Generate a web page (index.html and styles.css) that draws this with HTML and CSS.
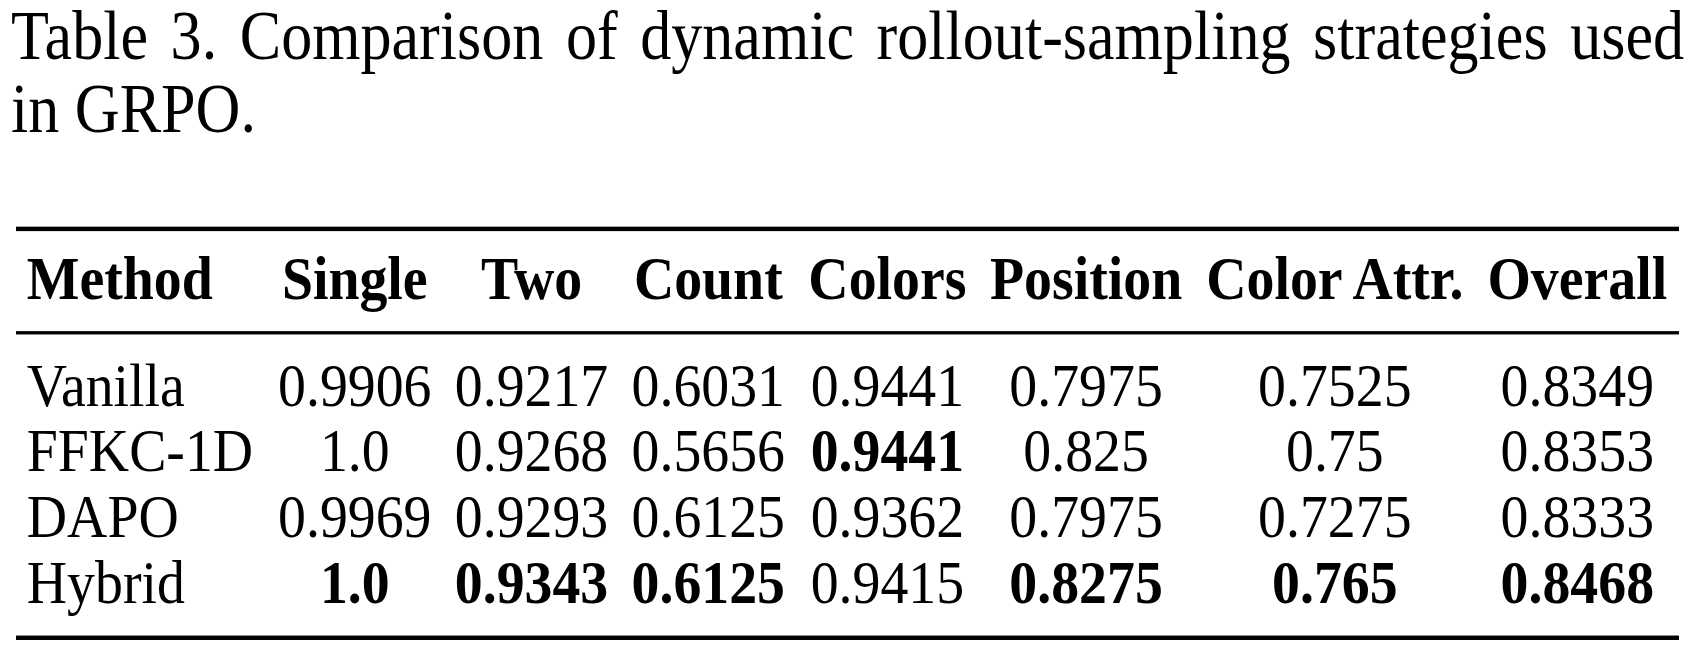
FILE: index.html
```html
<!DOCTYPE html>
<html>
	<head>
		<meta charset="UTF-8">
		<title>Table 3</title>
		<link rel="stylesheet" href="styles.css">
	</head>
	<body>
		<div class="page">
			<p class="caption">Table 3. Comparison of dynamic rollout-sampling strategies used in GRPO.</p>

			<table class="results">
				<thead>
					<tr>
						<th class="name">Method</th>
						<th>Single</th>
						<th>Two</th>
						<th>Count</th>
						<th>Colors</th>
						<th>Position</th>
						<th>Color Attr.</th>
						<th>Overall</th>
					</tr>
				</thead>
				<tbody>
					<tr>
						<td class="name">Vanilla</td>
						<td>0.9906</td>
						<td>0.9217</td>
						<td>0.6031</td>
						<td>0.9441</td>
						<td>0.7975</td>
						<td>0.7525</td>
						<td>0.8349</td>
					</tr>
					<tr>
						<td class="name">FFKC-1D</td>
						<td>1.0</td>
						<td>0.9268</td>
						<td>0.5656</td>
						<td class="best">0.9441</td>
						<td>0.825</td>
						<td>0.75</td>
						<td>0.8353</td>
					</tr>
					<tr>
						<td class="name">DAPO</td>
						<td>0.9969</td>
						<td>0.9293</td>
						<td>0.6125</td>
						<td>0.9362</td>
						<td>0.7975</td>
						<td>0.7275</td>
						<td>0.8333</td>
					</tr>
					<tr>
						<td class="name">Hybrid</td>
						<td class="best">1.0</td>
						<td class="best">0.9343</td>
						<td class="best">0.6125</td>
						<td>0.9415</td>
						<td class="best">0.8275</td>
						<td class="best">0.765</td>
						<td class="best">0.8468</td>
					</tr>
				</tbody>
			</table>
		</div>
	</body>
</html>
```

FILE: styles.css
```css
html, body{
	margin: 0;
	padding: 0;
	background: #fff;
}
body{
	min-height: 650px;
}

.page{
	width: 1698px;
	height: 585px;
	transform: scaleY(1.1111);
	transform-origin: 0 0;
	font-family: "Liberation Serif", "Times New Roman", serif;
	color: #000;
}

.caption{
	margin: 0 0 0 11px;
	width: 1673px;
	font-size: 62.1px;
	line-height: 65.7px;
	text-align: justify;
}

.results{
	margin: 72.9px 0 0 16px;
	width: 1663px;
	border-collapse: collapse;
	font-size: 55.8px;
	line-height: 59.4px;
	border-top: solid 4px #000;
	border-bottom: solid 4px #000;
}

.results th,
.results td{
	padding: 0 10.8px;
	text-align: center;
	white-space: nowrap;
}
.results .name{
	text-align: left;
}

.results thead th{
	font-weight: bold;
	padding-top: 12.6px;
	padding-bottom: 18px;
	border-bottom: solid 3px #000;
}

.results tbody tr:first-child td{
	padding-top: 15.3px;
}
.results tbody tr:last-child td{
	padding-bottom: 18px;
}

.results .best{
	font-weight: bold;
}
```
